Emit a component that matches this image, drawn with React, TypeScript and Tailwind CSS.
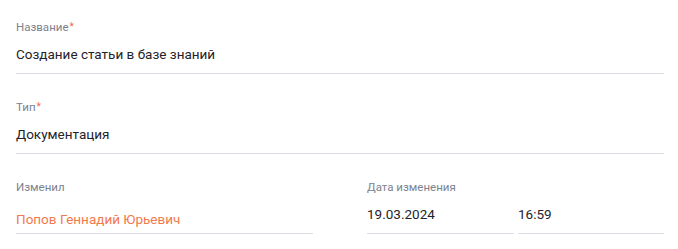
import React from 'react';

const Label: React.FC<{ text: string; required?: boolean }> = ({ text, required }) => (
  <div className="text-[11.5px] leading-4 text-[#7c828f]">
    {text}
    {required && <span className="text-[#f2694a] text-[10px] align-top ml-[1px]">*</span>}
  </div>
);

export default function App() {
  return (
    <div className="w-[678px] h-[249px] bg-white pl-4 pr-[14px] pt-[19px] font-['Roboto','Liberation_Sans',sans-serif] text-[#1f2329]">
      <div className="border-b border-[#dcdce4] pb-[9px]">
        <Label text="Название" required />
        <div className="mt-[9px] text-[13.5px] leading-5">Создание статьи в базе знаний</div>
      </div>

      <div className="border-b border-[#dcdce4] pb-[9px] pt-[25px]">
        <Label text="Тип" required />
        <div className="mt-[9px] text-[13.5px] leading-5">Документация</div>
      </div>

      <div className="grid grid-cols-2 gap-x-[54px] pt-[25px]">
        <div className="border-b border-[#dcdce4] pb-[9px]">
          <Label text="Изменил" />
          <div className="mt-[9px] pt-[5px] -mb-[5px] text-[13.5px] leading-5 text-[#f27a4d]">Попов Геннадий Юрьевич</div>
        </div>
        <div>
          <Label text="Дата изменения" />
          <div className="flex gap-1 mt-[9px]">
            <div className="w-[147px] border-b border-[#dcdce4] pb-[9px] text-[13.5px] leading-5">19.03.2024</div>
            <div className="flex-1 border-b border-[#dcdce4] pb-[9px] text-[13.5px] leading-5">16:59</div>
          </div>
        </div>
      </div>
    </div>
  );
}
